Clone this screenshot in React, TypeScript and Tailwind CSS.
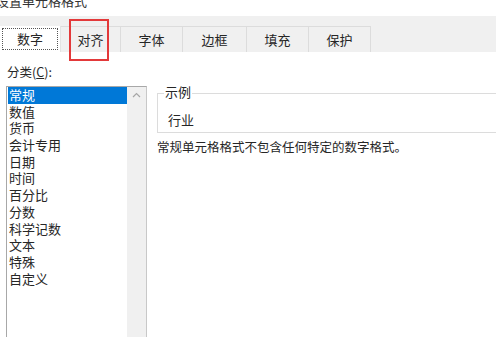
import React from "react";

const items = ["常规", "数值", "货币", "会计专用", "日期", "时间", "百分比", "分数", "科学记数", "文本", "特殊", "自定义"];
const tabs = ["数字", "对齐", "字体", "边框", "填充", "保护"];
const tabW = [61, 60, 62, 64, 62, 62];

export default function App() {
  return (
    <div
      className="relative w-[496px] h-[337px] overflow-hidden bg-white text-[#262626]"
      style={{ fontFamily: '"Microsoft YaHei", "Noto Sans CJK SC", "Noto Sans", sans-serif' }}
    >
      <div className="h-[16px] relative overflow-hidden">
        <div className="relative top-[-6px] left-[-4px] text-[13px] leading-[13px] text-[#333]">设置单元格格式</div>
      </div>
      <div className="h-[36px] bg-[#f0f0f0] flex items-end">
        {tabs.map((t, i) => (
          <div
            key={t}
            style={{ width: tabW[i] }}
            className={
              i === 0
                ? "h-[26px] bg-white flex items-center justify-center border-r border-[#e3e3e3] p-[2px]"
                : "h-[26px] bg-[#f0f0f0] flex items-center justify-center border-r border-t border-[#dcdcdc] text-[13px]"
            }
          >
            {i === 0 ? (
              <div className="w-full h-full border border-dotted border-[#555] flex items-center justify-center text-[13px]">
                {t}
              </div>
            ) : (
              t
            )}
          </div>
        ))}
      </div>
      <div className="flex">
        <div className="pl-[6px] w-[150px] shrink-0">
          <div className="text-[12.5px] leading-[16px] mt-[12px] ml-[1px]">
            分类(<span className="underline">C</span>):
          </div>
          <div className="mt-[6px] w-[141px] h-[260px] border border-[#a8a8a8] border-r-[#c8c8c8] flex">
            <div className="w-[120px] pl-[1px]">
              {items.map((it, i) => (
                <div
                  key={it}
                  className={
                    "h-[16.7px] leading-[16.7px] text-[13px] pl-[1px] " +
                    (i === 0 ? "bg-[#0078d7] text-white" : "")
                  }
                >
                  {it}
                </div>
              ))}
            </div>
            <div className="flex-1 bg-[#f0f0f0] flex justify-center pt-[5px]">
              <svg width="9" height="6" viewBox="0 0 9 6">
                <path d="M1 5 L4.5 1.5 L8 5" fill="none" stroke="#a6a6a6" strokeWidth="1.2" />
              </svg>
            </div>
          </div>
        </div>
        <div className="flex-1 pl-[7px]">
          <div className="relative mt-[41px] h-[40px] border border-[#dcdcdc] border-r-0">
            <div className="absolute left-[6px] top-[-10px] bg-white px-[1px] text-[13px] leading-[16px]">示例</div>
            <div className="text-[13px] leading-[16px] pl-[10px] pt-[18px]">行业</div>
          </div>
          <div className="text-[12.5px] leading-[16px] mt-[6px]">常规单元格格式不包含任何特定的数字格式。</div>
        </div>
      </div>
      <div className="absolute left-[69px] top-[19px] w-[40px] h-[42px] border-2 border-[#e3393a]" />
    </div>
  );
}
